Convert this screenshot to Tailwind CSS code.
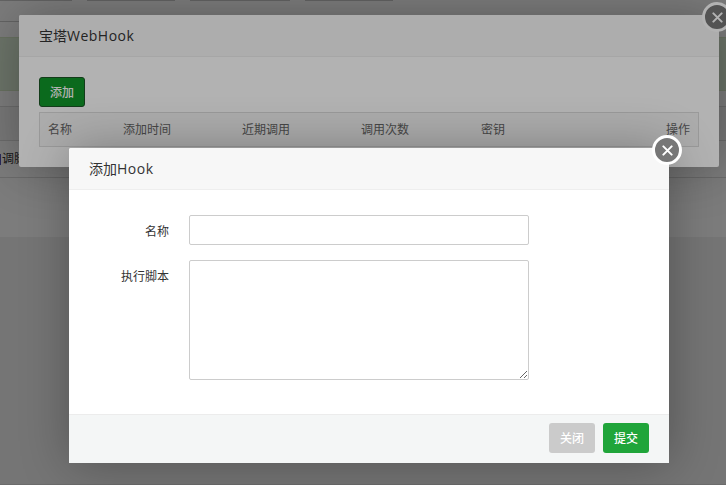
<!DOCTYPE html>
<html lang="zh-CN">
<head>
<meta charset="utf-8">
<title>宝塔WebHook</title>
<script src="https://cdn.jsdelivr.net/npm/@tailwindcss/browser@4"></script>
</head>
<body class="relative h-[485px] w-[726px] overflow-hidden bg-[#f1f1f1] font-['Noto_Sans','Noto_Sans_CJK_SC',sans-serif] text-xs text-[#333]">
  <!-- Page behind the dialogs -->
  <main class="flex h-[237px] flex-col bg-white">
    <div class="flex h-[22px] items-start gap-[15px] border-b border-[#ccc]">
      <span class="h-px w-[72px] bg-[#ccc]"></span>
      <span class="h-px w-[88px] bg-[#ccc]"></span>
      <span class="h-px w-[100px] bg-[#ccc]"></span>
      <span class="h-px w-[88px] bg-[#ccc]"></span>
    </div>
    <div class="mt-[15px] h-[54px] border-y border-[#d6e9c6] bg-[#dff0d8]"></div>
    <div class="mt-[15px] h-[35px] border-y border-[#ddd] bg-[#f6f6f6]"></div>
    <div class="flex h-[37px] items-center border-b border-[#ddd]"><span class="h-[11px] w-px bg-[#55b]"></span><span class="pl-px">调脚本</span></div>
  </main>
  <div class="absolute inset-x-0 bottom-0 h-px bg-[#ddd]"></div>
  <div class="absolute inset-0 bg-black/30"></div>

  <!-- WebHook list -->
  <section class="absolute left-[19px] top-[15px] h-[152px] w-[700px] rounded-[2px] bg-white shadow-[1px_1px_50px_rgba(0,0,0,0.3)]">
    <h2 class="h-[42px] rounded-t-[2px] border-b border-[#eee] bg-[#f8f8f8] px-5 text-sm leading-[42px]">宝塔<span class="font-['Open_Sans'] tracking-[0.5px]">WebHook</span></h2>
    <div class="px-5 pt-5">
      <button class="block h-[30px] w-[46px] rounded-[3px] border border-[#1c5626] bg-[#10982a] pt-px text-xs font-medium text-white">添加</button>
      <div class="mt-[5px] grid h-[35px] grid-cols-[75px_119px_119px_120px_1fr_auto] items-center border border-[#ddd] bg-[#f6f6f6] px-2 text-[#666]">
        <span>名称</span><span>添加时间</span><span>近期调用</span><span>调用次数</span><span>密钥</span><span>操作</span>
      </div>
    </div>
    <button class="absolute -right-[13px] -top-[13px] flex size-[30px] items-center justify-center rounded-full border-[3px] border-white bg-[#777] text-white">
      <svg class="size-[11px]" viewBox="0 0 12 12" fill="none" stroke="currentColor" stroke-width="2.2" stroke-linecap="round"><path d="M1.5 1.5 10.5 10.5M10.5 1.5 1.5 10.5"/></svg>
    </button>
  </section>
  <div class="absolute inset-0 bg-black/30"></div>

  <!-- Add hook -->
  <section class="absolute left-[69px] top-[148px] flex h-[315px] w-[600px] flex-col rounded-t-[2px] bg-white shadow-[1px_1px_50px_rgba(0,0,0,0.3)]">
    <h2 class="h-[42px] shrink-0 rounded-t-[2px] border-b border-[#eee] bg-[#f7f7f7] px-5 text-sm leading-[42px]">添加<span class="font-['Open_Sans'] tracking-[0.5px]">Hook</span></h2>
    <form class="flex flex-1 flex-col gap-[15px] pt-[25px]">
      <label class="flex h-[30px] gap-5"><span class="w-[100px] text-right leading-[33px]">名称</span><input class="h-[30px] w-[340px] rounded-[2px] border border-[#ccc]"></label>
      <label class="flex h-[120px] gap-5"><span class="w-[100px] text-right leading-[33px]">执行脚本</span><textarea class="h-[120px] w-[340px] rounded-[2px] border border-[#ccc]"></textarea></label>
    </form>
    <footer class="flex h-[49px] shrink-0 justify-end gap-2 border-t border-[#ececec] bg-[#f4f6f6] px-5 pt-2 font-medium text-white">
      <button class="h-[30px] w-[46px] rounded-[3px] bg-[#cbcbcb] pt-0.5">关闭</button>
      <button class="h-[30px] w-[46px] rounded-[3px] bg-[#20a53a] pt-0.5">提交</button>
    </footer>
    <button class="absolute -right-[13px] -top-[13px] flex size-[30px] items-center justify-center rounded-full border-[3px] border-white bg-[#777] text-white">
      <svg class="size-[11px]" viewBox="0 0 12 12" fill="none" stroke="currentColor" stroke-width="2.2" stroke-linecap="round"><path d="M1.5 1.5 10.5 10.5M10.5 1.5 1.5 10.5"/></svg>
    </button>
  </section>
</body>
</html>
